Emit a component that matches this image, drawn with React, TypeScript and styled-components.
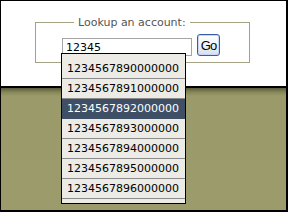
import styled, { createGlobalStyle } from "styled-components";

const GlobalStyle = createGlobalStyle`
  html, body {
    margin: 0;
    padding: 0;
    background: #fff;
  }
  * {
    box-sizing: border-box;
  }
`;

const Frame = styled.div`
  width: 288px;
  height: 212px;
  display: flex;
  flex-direction: column;
  border: 1px solid #000;
  border-right-width: 2px;
  border-bottom-width: 2px;
  overflow: hidden;
  font-family: "DejaVu Sans", Verdana, sans-serif;
`;

const Header = styled.div`
  height: 87px;
  flex: none;
  background: #fff;
  border-bottom: 2px solid #000;
  padding: 15px 0 0 34px;
`;

const Ground = styled.div`
  flex: 1;
  background: linear-gradient(#5a5a38 0px, #858558 4px, #9a9a6a 8px, #9b9b6b 100%);
`;

const Fieldset = styled.fieldset`
  width: 215px;
  margin: 0;
  padding: 5px 0 6px 26px;
  border: 1px solid #a3a383;
  position: relative;
  z-index: 2;
`;

const Legend = styled.legend`
  margin-left: 12px;
  padding: 0 4px;
  font-size: 11px;
  line-height: 13px;
  color: #555;
`;

const Row = styled.div`
  display: flex;
  align-items: flex-end;
  gap: 5px;
`;

const InputWrap = styled.div`
  position: relative;
`;

const TextInput = styled.input`
  width: 130px;
  height: 18px;
  border: 1px solid #a5a5a5;
  padding: 0 0 0 3px;
  font-family: "DejaVu Sans", Verdana, sans-serif;
  font-size: 11px;
  color: #000;
  outline: none;
  background: #fff;
`;

const GoButton = styled.button`
  width: 23px;
  height: 22px;
  padding: 0;
  border: 1px solid #3a5ca8;
  border-radius: 3px;
  background: linear-gradient(#ffffff, #eef2fb 50%, #d6deef);
  box-shadow: inset 0 0 0 1px #c9d6f2;
  font-family: "Liberation Sans", Arial, sans-serif;
  font-size: 13px;
  letter-spacing: -1px;
  color: #000;
  display: flex;
  align-items: center;
  justify-content: center;
`;

const Dropdown = styled.ul`
  position: absolute;
  left: -1px;
  top: 17px;
  width: 125px;
  height: 151px;
  margin: 0;
  padding: 5px 0 0;
  list-style: none;
  background: #ecebe6;
  border: 1px solid #000;
`;

const Item = styled.li<{ $active?: boolean }>`
  height: 20px;
  line-height: 19px;
  padding-left: 5px;
  font-size: 11px;
  color: ${(p) => (p.$active ? "#fff" : "#000")};
  background: ${(p) => (p.$active ? "#3e4f66" : "transparent")};
  border-bottom: 1px solid ${(p) => (p.$active ? "#3e4f66" : "#8c8c8c")};
`;

const suggestions = [
  "1234567890000000",
  "1234567891000000",
  "1234567892000000",
  "1234567893000000",
  "1234567894000000",
  "1234567895000000",
  "1234567896000000",
];

export default function App() {
  return (
    <>
      <GlobalStyle />
      <Frame>
        <Header>
          <Fieldset>
            <Legend>Lookup an account:</Legend>
            <Row>
              <InputWrap>
                <TextInput defaultValue="12345" />
                <Dropdown>
                  {suggestions.map((s, i) => (
                    <Item key={s} $active={i === 2}>
                      {s}
                    </Item>
                  ))}
                </Dropdown>
              </InputWrap>
              <GoButton>Go</GoButton>
            </Row>
          </Fieldset>
        </Header>
        <Ground />
      </Frame>
    </>
  );
}
